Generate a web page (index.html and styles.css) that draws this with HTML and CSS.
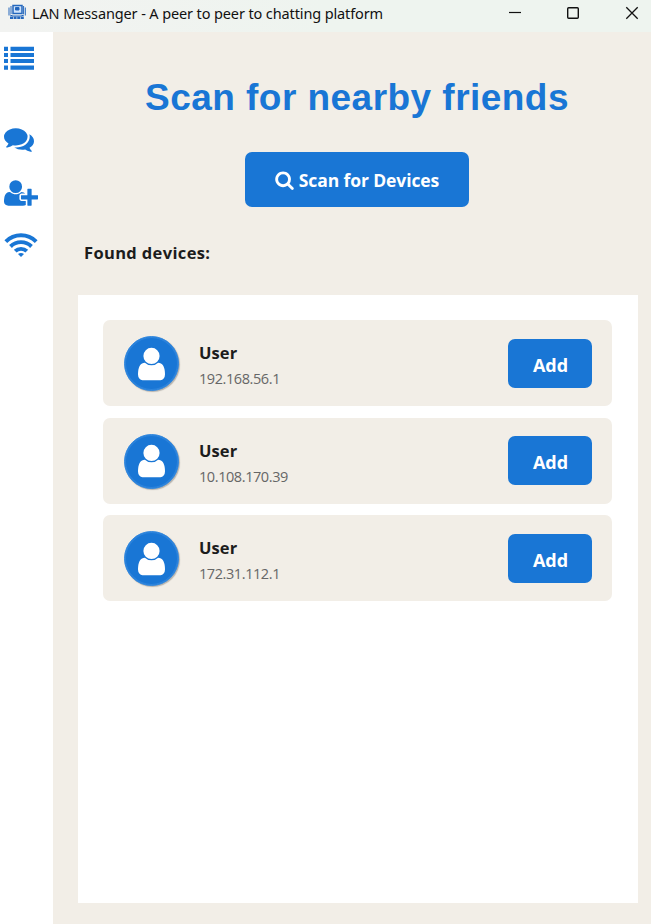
FILE: index.html
```html
<!DOCTYPE html>
<html lang="en">
<head>
<meta charset="utf-8">
<title>LAN Messanger</title>
<link rel="stylesheet" href="styles.css">
</head>
<body>
<svg class="defs" aria-hidden="true">
  <symbol id="user" viewBox="0 0 1280 1792"><path d="M1280 1399q0 109-62.5 187t-150.5 78h-854q-88 0-150.5-78t-62.5-187q0-85 8.5-160.5t31.5-152 58.5-131 94-89 134.5-34.5q131 128 313 128t313-128q76 0 134.5 34.5t94 89 58.5 131 31.5 152 8.5 160.5zm-256-887q0 159-112.5 271.5t-271.5 112.5-271.5-112.5-112.5-271.5 112.5-271.5 271.5-112.5 271.5 112.5 112.5 271.5z"/></symbol>
</svg>
<div class="window">
  <header class="titlebar">
    <svg class="app-icon" viewBox="0 0 18 16" fill="none" stroke="#2467bd">
      <path d="M5 1.500h9v8H5z" stroke-width="1.500" fill="#cfe3fa"/>
      <path d="M7.500 3.500h3.500v2.500H7.500z" fill="#1c63bd"/>
      <path d="M3 2v8M1 3.500v8M15.600 2v8M17.300 3.500v8M2 11l3 1h8l3-1" stroke-width="1"/>
      <path d="M2 13.700h14" stroke-width="2.400" stroke-dasharray="3 .6"/>
    </svg>
    <span class="title">LAN Messanger - A peer to peer to chatting platform</span>
    <svg class="controls" viewBox="0 0 142 32" fill="none" stroke="#111">
      <path d="M0 12.500h12" stroke-width="1.200"/>
      <rect x="58.700" y="7.700" width="10.600" height="10.600" rx="1" stroke-width="1.400"/>
      <path d="M117.300 7.300l11.400 11.400M128.700 7.300l-11.400 11.400" stroke-width="1.300"/>
    </svg>
  </header>
  <div class="body">
    <nav class="sidebar">
      <svg class="nav-list" viewBox="0 0 30 24"><path d="M0 .7h4v4.300H0zM6.500 .7H30v4.300H6.500zM0 7h4v4H0zM6.500 7H30v4H6.500zM0 13h4v4H0zM6.500 13H30v4H6.500zM0 19.500h4v4.300H0zM6.500 19.500H30v4.300H6.500z"/></svg>
      <svg class="nav-chat" viewBox="0 0 1792 1792"><path d="M1408 768q0 139-94 257t-256.500 186.500-353.500 68.500q-86 0-176-16-124 88-278 128-36 9-86 16h-3q-11 0-20.500-8t-11.500-21q-1-3-1-6.500t.5-6.500 2-6l2.500-5 3.500-5.500 4-5 4.500-5 4-4.500q5-6 23-25t26-29.500 22.500-29 25-38.500 20.500-44q-124-72-195-177t-71-224q0-139 94-257t256.500-186.500 353.500-68.500 353.500 68.500 256.500 186.500 94 257zm384 256q0 120-71 224.500t-195 176.500q10 24 20.500 44t25 38.500 22.500 29 26 29.500 23 25q1 1 4 4.500t4.500 5 4 5 3.500 5.500l2.500 5 2 6 .5 6.500-1 6.500q-3 14-13 22t-22 7q-50-7-86-16-154-40-278-128-90 16-176 16-271 0-472-132 58 4 88 4 161 0 309-45t264-129q125-92 192-212t67-254q0-77-23-152 129 71 204 178t75 230z"/></svg>
      <svg class="nav-add" viewBox="0 0 2048 1792"><path d="M704 896q-159 0-271.500-112.500t-112.500-271.500 112.500-271.500 271.500-112.500 271.500 112.500 112.500 271.500-112.500 271.500-271.500 112.500zm960 128h352q13 0 22.500 9.500t9.500 22.500v192q0 13-9.500 22.500t-22.500 9.500h-352v352q0 13-9.500 22.500t-22.500 9.500h-192q-13 0-22.500-9.500t-9.500-22.500v-352h-352q-13 0-22.500-9.500t-9.500-22.500v-192q0-13 9.500-22.500t22.500-9.500h352v-352q0-13 9.500-22.500t22.500-9.500h192q13 0 22.500 9.500t9.500 22.500v352zm-736 224q0 52 38 90t90 38h256v238q-68 50-171 50h-874q-121 0-194-69t-73-190q0-53 3.500-103.500t14-109 26.500-108.500 43-97.500 62-81 85.500-53.500 111.500-20q19 0 39 17 79 61 154.500 91.500t164.500 30.500 164.500-30.500 154.500-91.500q20-17 39-17 132 0 217 96h-223q-52 0-90 38t-38 90v192z"/></svg>
      <svg class="nav-wifi" viewBox="0 0 34 24"><g fill="none" stroke="#1976d5" stroke-width="3.900"><path d="M1.800 8.600A21.500 21.500 0 0 1 32.200 8.600"/><path d="M6.500 13.500A14.900 14.900 0 0 1 27.500 13.500"/><path d="M11.200 18.200A8.300 8.300 0 0 1 22.800 18.200"/></g><path d="M17 24l-3-3Q17 19 20 21z"/></svg>
    </nav>
    <main class="content">
      <h1>Scan for nearby friends</h1>
      <button class="scan"><svg viewBox="0 0 1664 1792"><path d="M1152 832q0-185-131.500-316.500t-316.500-131.500-316.500 131.500-131.500 316.500 131.500 316.500 316.500 131.500 316.500-131.500 131.500-316.500zm512 832q0 52-38 90t-90 38q-54 0-90-38l-343-342q-179 124-399 124-143 0-273.500-55.500t-225-150-150-225-55.500-273.500 55.500-273.500 150-225 225-150 273.500-55.500 273.500 55.500 225 150 150 225 55.500 273.500q0 220-124 399l343 343q37 37 37 90z"/></svg><span>Scan for Devices</span></button>
      <h2>Found devices:</h2>
      <section class="devices">
        <article class="device">
          <div class="avatar"><svg><use href="#user"/></svg></div>
          <div class="info"><div><strong>User</strong></div><div><span class="ip">192.168.56.1</span></div></div>
          <button class="add">Add</button>
        </article>
        <article class="device">
          <div class="avatar"><svg><use href="#user"/></svg></div>
          <div class="info"><div><strong>User</strong></div><div><span class="ip">10.108.170.39</span></div></div>
          <button class="add">Add</button>
        </article>
        <article class="device">
          <div class="avatar"><svg><use href="#user"/></svg></div>
          <div class="info"><div><strong>User</strong></div><div><span class="ip">172.31.112.1</span></div></div>
          <button class="add">Add</button>
        </article>
      </section>
    </main>
  </div>
</div>
</body>
</html>
```
FILE: styles.css
```css
* { box-sizing: border-box; }
body { margin: 0; font-family: "Open Sans", "Noto Sans", sans-serif; color: #1c1c1c; }
svg { display: block; flex: none; }
.defs { display: none; }
.window { width: 651px; height: 924px; display: flex; flex-direction: column; overflow: hidden; }
.titlebar { height: 32px; flex: none; display: flex; align-items: flex-start; padding-left: 8px; background: linear-gradient(90deg, #f2f3f1, #eef4ef 50%); }
.app-icon { width: 18px; height: 16px; margin-top: 4px; }
.title { margin-left: 6px; font: 14.500px/27px "Noto Sans", sans-serif; color: #111; white-space: nowrap; letter-spacing: -.12px; width: 477px; }
.controls { width: 142px; height: 32px; }
.body { flex: 1; display: flex; min-height: 0; }
.sidebar { width: 53px; background: #fff; padding: 14px 0 0 4px; }
.sidebar svg { fill: #1976d5; }
.nav-list { width: 30px; height: 24px; }
.nav-chat { width: 30px; height: 30px; margin-top: 53.500px; }
.nav-add { width: 34px; height: 30px; margin-top: 24px; }
.nav-wifi { width: 34px; height: 24px; margin: 25.500px 0 0; }
.content { flex: 1; background: #f2eee7; padding: 42px 13px 21px 25px; display: flex; flex-direction: column; }
h1 { margin: 0 2px 0 0; align-self: center; font: bold 37px/48px "Liberation Sans", Arial, sans-serif; letter-spacing: .46px; color: #1976d5; white-space: nowrap; }
button { border: 0; background: #1976d5; color: #fff; font-family: inherit; font-weight: 700; padding: 0; }
.scan { align-self: center; width: 224px; height: 55px; margin: 29.500px 2px 0 0; border-radius: 7px; font-size: 17.500px; letter-spacing: -.1px; display: flex; align-items: center; justify-content: center; gap: 5px; white-space: nowrap; }
.scan svg { width: 19px; height: 20px; margin-top: 1px; fill: #fff; }
.scan span { padding-top: 2px; }
h2 { margin: 34.500px 0 30px 6px; font-size: 16.500px; line-height: 24px; font-weight: 700; letter-spacing: .35px; }
.devices { flex: 1; background: #fff; padding: 25px 26px 0 25px; display: flex; flex-direction: column; gap: 11.500px; }
.device { height: 86px; flex: none; background: #f2eee7; border-radius: 7px; display: flex; align-items: center; padding: 0 20px 0 21px; }
.avatar { width: 55px; height: 55px; margin-top: 1px; border-radius: 50%; background: #1976d5; border: 1px solid #3489df; box-shadow: inset 0 0 0 1px #2e84dc, 1px 1px 1px rgba(0,0,0,.25); display: flex; justify-content: center; align-items: center; }
.avatar svg { width: 27px; height: 38px; fill: #fff; }
.info { margin-left: 20px; flex: 1; padding-top: 4px; }
.info > div { height: 25px; line-height: 26px; }
.info strong { font-size: 16.500px; letter-spacing: .1px; }
.ip { font-size: 14.500px; color: #666; letter-spacing: -.42px; }
.add { width: 84px; height: 49px; border-radius: 7px; font-size: 18px; padding: 3px 0 0 1px; }
```
